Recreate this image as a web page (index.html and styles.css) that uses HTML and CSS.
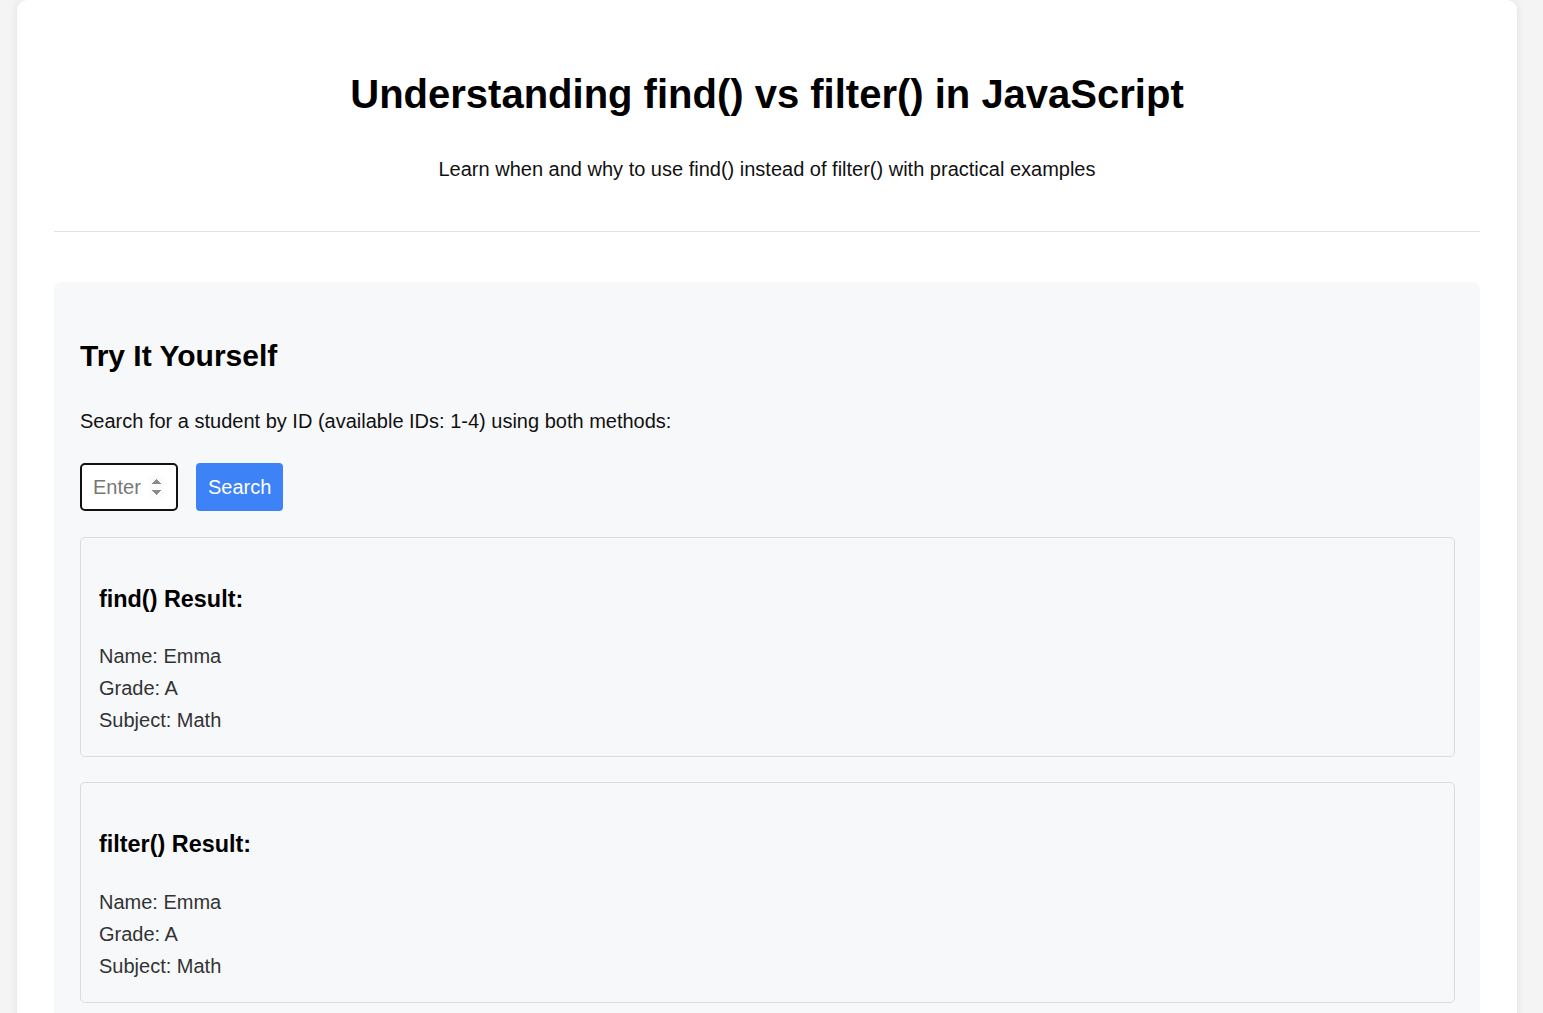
FILE: index.html
```html
<!DOCTYPE html>
<html lang="en">
<head>
<meta charset="utf-8">
<title>Understanding find() vs filter() in JavaScript</title>
<link rel="stylesheet" href="styles.css">
</head>
<body>
<main class="container">
  <header class="header">
    <h1 class="title">Understanding find() vs filter() in JavaScript</h1>
    <p class="subtitle">Learn when and why to use find() instead of filter() with practical examples</p>
  </header>
  <section class="panel">
    <h2 class="panel-title">Try It Yourself</h2>
    <p class="panel-text">Search for a student by ID (available IDs: 1-4) using both methods:</p>
    <div class="controls">
      <input class="id-input" type="number" placeholder="Enter" autofocus>
      <button class="search-btn" type="button">Search</button>
    </div>
    <div class="result">
      <h3 class="result-title">find() Result:</h3>
      <div class="result-line">Name: Emma</div>
      <div class="result-line">Grade: A</div>
      <div class="result-line">Subject: Math</div>
    </div>
    <div class="result">
      <h3 class="result-title">filter() Result:</h3>
      <div class="result-line">Name: Emma</div>
      <div class="result-line">Grade: A</div>
      <div class="result-line">Subject: Math</div>
    </div>
  </section>
</main>
</body>
</html>
```
FILE: styles.css
```css
html, body {
  margin: 0;
  padding: 0;
}
body {
  background: #f4f4f4;
  font-family: "Liberation Sans", Arial, sans-serif;
  color: #000;
  padding-left: 17px;
  overflow: hidden;
  height: 1013px;
}
.container {
  width: 1500px;
  box-sizing: border-box;
  background: #fff;
  border-radius: 10px;
  box-shadow: 0 0 10px rgba(0, 0, 0, 0.08);
  padding: 0 37px 40px;
  min-height: 1100px;
}
.header {
  text-align: center;
  padding: 70px 0 46px;
  border-bottom: 1px solid #e2e2e2;
}
.title {
  margin: 0;
  font-size: 40px;
  line-height: 48px;
  font-weight: 700;
}
.subtitle {
  margin: 35px 0 0;
  font-size: 20px;
  line-height: 32px;
  color: #111;
}
.panel {
  margin-top: 50px;
  background: #f7f8fa;
  border-radius: 8px;
  padding: 25px 25px 30px 26px;
}
.panel-title {
  margin: 25px 0 0;
  font-size: 30px;
  line-height: 48px;
  font-weight: 700;
}
.panel-text {
  margin: 25px 0 0;
  font-size: 20px;
  line-height: 32px;
  color: #111;
}
.controls {
  display: flex;
  gap: 18px;
  margin-top: 26px;
}
.id-input {
  width: 98px;
  height: 48px;
  box-sizing: border-box;
  border: 2px solid #111;
  border-radius: 5px;
  padding: 0 12px 0 11px;
  font-family: "Liberation Sans", Arial, sans-serif;
  font-size: 20px;
  background: #fff;
  outline: none;
}
.id-input::placeholder {
  color: #777;
}
.search-btn {
  height: 48px;
  padding: 0 12px;
  border: none;
  border-radius: 4px;
  background: #3d82f7;
  color: #fff;
  font-family: "Liberation Sans", Arial, sans-serif;
  font-size: 20px;
}
.result {
  margin-top: 26px;
  border: 1px solid #dcdcdc;
  border-radius: 5px;
  padding: 20px 19px 20px 18px;
}
.result + .result {
  margin-top: 25px;
}
.result-title {
  margin: 23px 0 22px;
  font-size: 23.4px;
  line-height: 37.4px;
  font-weight: 700;
}
.result-line {
  font-size: 20px;
  line-height: 32px;
  color: #333;
}
```
